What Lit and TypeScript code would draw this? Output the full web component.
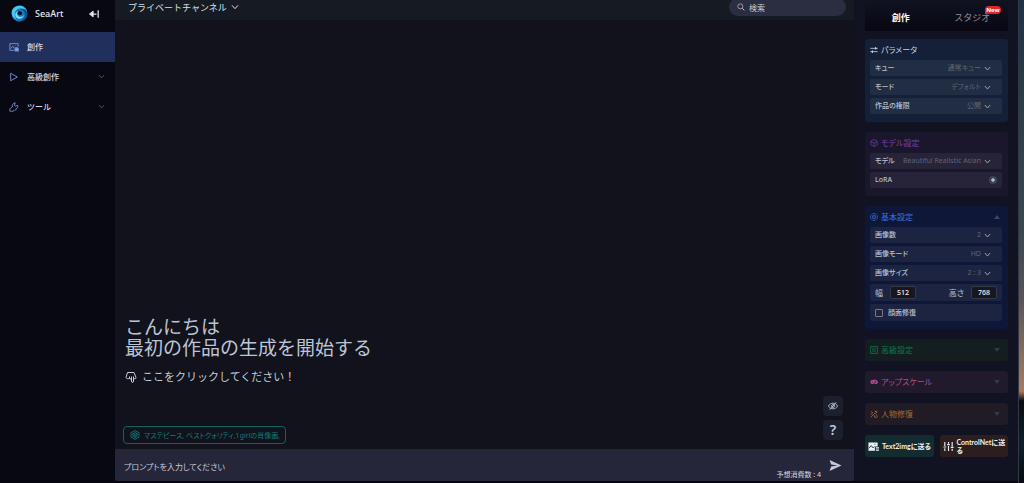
import { LitElement, html, css, svg, TemplateResult } from "lit";
import { customElement, property, state } from "lit/decorators.js";

type Option = { id: string; label: string; value: string };

const icons: Record<string, TemplateResult> = {
  chevron: svg`<path d="M3 7l9 10 9-10" stroke-width="3"/>`,
  collapse: svg`<path d="M1 12l9-7v14z" fill="currentColor"/><path d="M8 12h10M22 3v18" stroke-width="3"/>`,
  image: svg`<path d="M12 20H2V4h20v7"/><path d="M4 16l5-6 4 5 2-2M16 8h1"/><path d="M14 15h9v7h-9zM16 15v-2h5v2" fill="currentColor" stroke-width="1"/>`,
  play: svg`<path d="M4 3l16 9-16 9z"/>`,
  wrench: svg`<path d="M2 22c-1-5 1-8 5-9l1-1c-1-5 2-10 7-10l-2 6 2 2 6-2c1 4-1 7-4 8 1 2 0 3-3 3-2 3-6 4-12 3z"/>`,
  search: svg`<circle cx="10" cy="10" r="7.5"/><path d="M16 16l6 6" stroke-width="3"/>`,
  swap: svg`<path d="M1 7h22M23 17H1" stroke-width="2.500"/><path d="M15 2v10l6-5zM9 12v10l-6-5z" fill="currentColor" stroke="none"/>`,
  cube: svg`<path d="M12 1.500l9.500 5v11L12 22.500l-9.500-5v-11z"/><path d="M7 9l5-3 5 3v6l-5 3-5-3zM7 9l5 3 5-3M12 12v6"/>`,
  hex: svg`<path d="M12 1.500l9.500 5v11L12 22.500l-9.500-5v-11z"/><path d="M3 7l9 6 9-6M12 13v9" stroke-width="2"/>`,
  gear: svg`<path d="M8 2h8l6 6v8l-6 6H8l-6-6V8z"/><circle cx="12" cy="12" r="5"/><path d="M9 12h6"/>`,
  list: svg`<rect x="1" y="2" width="22" height="20" stroke-width="2.500"/><path d="M6 9h12M6 15h12" stroke-width="2.500"/>`,
  upscale: svg`<path d="M2 7h5l3-2h7l5 3 2 4-3 6h-6l-3-2-4 2H4l-3-6z" fill="currentColor" stroke="none"/><path d="M5 12h4M13 10h6M13 14h5" stroke="#241a2a"/>`,
  repair: svg`<path d="M2 22L15 9M3 4l6 5M2 13l5-2M14 3l6 3-4 5M19 13l3 8M13 16l1 6h6" stroke-width="2.500"/><circle cx="19" cy="5" r="2"/>`,
  plus: svg`<circle cx="12" cy="12" r="12" fill="#3b4450" stroke="none"/><path d="M12 6v12M6 12h12" stroke="#dfe3ea" stroke-width="3"/>`,
  hand: svg`<path d="M2 13l3-10h13l4 10c0 3-4 4-5 1v6c0 4-4 4-4 0v-6c-1 3-4 3-4 0-2 2-6 2-7-1zM9 11v4M13 11v4M17 11v3"/>`,
  eye: svg`<path d="M1 12c5-9 17-9 22 0-5 9-17 9-22 0z"/><circle cx="12" cy="12" r="3.500"/><path d="M4 21L20 3"/>`,
  send: svg`<path d="M1 2l22 10L1 22l3-8 12-2L4 10z" fill="currentColor" stroke="none"/>`,
  picture: svg`<path d="M1 3h20v9h-6v9H1z" fill="currentColor" stroke="none"/><path d="M2 16l5-6 4 5 3-3M14 7h2" stroke="#17302f"/><path d="M17 15h7M17 20h7" stroke-width="3"/>`,
  sliders: svg`<path d="M4 2v9M4 16v6M12 2v4M12 11v11M20 2v10M20 17v5M1 13h6M9 8h6M17 14h6" stroke-width="2.500"/>`,
};

const icon = (name: string, cls = "") => html`<svg
  class="icon ${cls}"
  viewBox="0 0 24 24"
  fill="none"
  stroke="currentColor"
  stroke-width="2"
  stroke-linejoin="round"
  aria-hidden="true"
>${icons[name]}</svg>`;

const shared = css`
  *, *::before, *::after { box-sizing: border-box; }
  button, input, select {
    font: inherit;
    color: inherit;
    background: none;
    border: 0;
    padding: 0;
    margin: 0;
    outline: none;
    font-feature-settings: inherit;
  }
  button, select { cursor: pointer; }
  a { color: inherit; text-decoration: none; }
  h1, h2, p { margin: 0; font: inherit; font-feature-settings: inherit; }
  .icon { display: block; flex: none; width: 10px; height: 10px; }
`;

@customElement("side-nav")
export class SideNav extends LitElement {
  static styles = [shared, css`
    :host { display: block; background: #080813; color: #d5d9e4; }
    .brand {
      display: flex; align-items: center; gap: 7px; height: 32px;
      padding: 0 16px 5px 11px; font-size: 9px; font-weight: 500; color: #e6e8ee;
    }
    .logo { width: 17px; height: 17px; flex: none; }
    .name { flex: 1; }
    .item {
      display: flex; align-items: center; gap: 8px; height: 30px;
      padding: 0 10px 1px 9px; font-size: 8px; font-weight: 500;
    }
    .glyph { color: #7d9fe0; }
    .active { background: #202f5b; }
    .label { flex: 1; }
    .more { width: 7px; height: 7px; color: #5b5f6c; }
  `];

  render() {
    return html`
      <div class="brand">
        <svg class="logo" viewBox="0 0 34 34" aria-hidden="true">
          <circle cx="17" cy="17" r="16" fill="#1478b8"/>
          <path d="M3 9C10-2 28-1 32 13 26 5 16 4 10 11 6 16 7 23 11 29 3 26-1 17 3 9z" fill="#48c8ee"/>
          <path d="M31 12c5 13-7 24-20 20 10 1 17-4 17-12 0-6-4-10-9-11 6-2 10-1 12 3z" fill="#0c4f8d"/>
          <path d="M11 25c5 5 14 2 15-5-3 4-8 5-12 2-3-3-3-7 0-10-6 2-7 9-3 13z" fill="#7fe0f4"/>
          <path d="M15 13c4-2 8 1 7 5-2 3-6 3-8 0-1-2 0-4 1-5z" fill="#071426"/>
        </svg>
        <span class="name">SeaArt</span>
        <button aria-label="メニューを閉じる">${icon("collapse")}</button>
      </div>
      <nav>
        <a class="item active" href="#create">${icon("image", "glyph")}<span class="label">創作</span></a>
        <a class="item" href="#advanced">${icon("play", "glyph")}<span class="label">高級創作</span>${icon("chevron", "more")}</a>
        <a class="item" href="#tools">${icon("wrench", "glyph")}<span class="label">ツール</span>${icon("chevron", "more")}</a>
      </nav>`;
  }
}

@customElement("channel-view")
export class ChannelView extends LitElement {
  static styles = [shared, css`
    :host { display: flex; flex-direction: column; min-width: 0; background: #11121b; color: #c6cbd8; }
    .bar {
      display: flex; justify-content: space-between; align-items: flex-start;
      height: 20px; padding: 0 8px 0 13px; background: #151a23;
    }
    .channel {
      display: flex; align-items: center; gap: 4px; height: 14px;
      font-size: 9px; color: #dde1e8;
    }
    .channel .icon { width: 8px; height: 8px; }
    .search {
      display: flex; align-items: center; gap: 4px; width: 117px; height: 18px; margin-top: -2px;
      padding: 0 8px; border-radius: 9px; background: #2b2d40; font-size: 8px;
    }
    .search .icon { width: 8px; height: 8px; }
    .search input { flex: 1; min-width: 0; }
    input::placeholder { color: #c6cbd8; opacity: 1; }
    .body { flex: 1; display: flex; justify-content: space-between; align-items: flex-end; padding: 0 11px 5px 8px; }
    .title { padding-left: 2px; font-size: 19px; line-height: 21px; color: #bcc4d6; }
    .hint {
      display: flex; align-items: center; gap: 5px; margin: 10px 0 41px;
      padding-left: 2px; font-size: 11px; line-height: 16px;
    }
    .hint .icon { width: 12px; height: 12px; }
    .chip {
      display: flex; align-items: center; gap: 4px; height: 18px; padding: 0 5px 0 6px;
      border: 1px solid #0d635f; border-radius: 4px; color: #108078;
      font-size: 7px; font-feature-settings: "palt";
    }
    .tools { display: flex; flex-direction: column; gap: 4px; padding-bottom: 4px; }
    .tool {
      display: grid; place-items: center; width: 20px; height: 20px;
      border-radius: 4px; background: #1b1f2e; font-size: 14px; line-height: 20px; font-weight: 600;
    }
    .prompt {
      display: flex; align-items: center; gap: 8px; height: 32px;
      padding: 0 12px 0 9px; border-radius: 0 0 2px 2px; background: #25263a;
      font-size: 8px; font-feature-settings: "palt";
    }
    .prompt input { flex: 1; min-width: 0; padding-top: 3px; }
    .cost { align-self: flex-end; padding-bottom: 2px; font-size: 7px; line-height: 9px; color: #d5d9e4; }
    .send .icon { width: 13px; height: 13px; }
  `];

  render() {
    return html`
      <header class="bar">
        <button class="channel">プライベートチャンネル ${icon("chevron")}</button>
        <label class="search">${icon("search")}<input type="search" placeholder="検索" aria-label="検索"></label>
      </header>
      <section class="body">
        <div>
          <h1 class="title">こんにちは<br>最初の作品の生成を開始する</h1>
          <p class="hint">${icon("hand")}ここをクリックしてください！</p>
          <button class="chip">${icon("cube")}マステピース, ベストクォリティ,1girlの肖像画,</button>
        </div>
        <div class="tools">
          <button class="tool" aria-label="非表示">${icon("eye")}</button>
          <button class="tool">?</button>
        </div>
      </section>
      <form class="prompt" @submit=${(e: Event) => e.preventDefault()}>
        <input type="text" placeholder="プロンプトを入力してください" aria-label="プロンプト">
        <span class="cost">予想消費数 : 4</span>
        <button class="send" aria-label="送信">${icon("send")}</button>
      </form>`;
  }
}

@customElement("settings-card")
export class SettingsCard extends LitElement {
  @property() heading = "";
  @property() glyph = "";
  @property() tone = "";
  @property() arrow = "";

  static styles = [shared, css`
    :host { display: block; }
    .card { padding: 0 6px 0 5px; border-radius: 3px; }
    .head { display: flex; align-items: center; gap: 3px; height: 21px; font-size: 8px; }
    .closed .head { height: 22px; padding-bottom: 1px; }
    .head .icon { width: 8px; height: 8px; }
    .label { flex: 1; }
    .rows { display: flex; flex-direction: column; gap: 3px; padding-bottom: 8px; color: #b9c0d0; }
    .arrow { border: 3px solid transparent; margin-right: 2px; }
    .up { border-bottom: 4px solid #3c4560; border-top: 0; }
    .down { border-top: 4px solid #303a4c; border-bottom: 0; }
    .navy { background: #142038; color: #c6cfe0; }
    .purple { background: #1a162c; color: #7641a8; }
    .blue { background: #0e1737; color: #3b74dc; }
    .green { background: #141d20; color: #0e7a50; }
    .pink { background: #211a2c; color: #b04c94; }
    .orange { background: #201b25; color: #a86c30; }
  `];

  render() {
    const open = this.arrow !== "down";
    return html`<section class="card ${this.tone} ${open ? "" : "closed"}">
      <h2 class="head">${icon(this.glyph)}<span class="label">${this.heading}</span>
        ${this.arrow ? html`<span class="arrow ${this.arrow}"></span>` : ""}
      </h2>
      ${open ? html`<div class="rows"><slot></slot></div>` : ""}
    </section>`;
  }
}

@customElement("settings-panel")
export class SettingsPanel extends LitElement {
  @state() private tab = "create";

  static styles = [shared, css`
    :host {
      display: flex; flex-direction: column; gap: 10px; padding: 0 10px 0 11px;
      background: #111322; color: #b9c0d0; font-feature-settings: "palt";
    }
    .tabs {
      display: grid; grid-template-columns: 1fr 1fr; height: 31px; margin-bottom: -2px;
      padding-top: 4px; background: linear-gradient(#111322, #080612); font-size: 9px;
      font-feature-settings: normal;
    }
    .tab { color: #8d909c; }
    .on { color: #fff; font-weight: 700; }
    .anchor { position: relative; }
    .badge {
      position: absolute; left: 31px; top: -5px; padding: 0 1px; border-radius: 4px 4px 4px 0;
      background: #e2252b; color: #fff; font-size: 6px; line-height: 8px; font-weight: 700;
    }
    .row {
      display: flex; align-items: center; gap: 3px; min-height: 16px; padding: 0 11px 0 5px;
      border-radius: 2px; background: rgb(255 255 255 / 6%); font-size: 7px; line-height: 10px;
      font-weight: 500;
    }
    .tall { min-height: 17px; }
    .end { padding-right: 5px; }
    .key { flex: 1; white-space: nowrap; }
    .pick {
      appearance: none; min-width: 0; max-width: 78px; overflow: hidden; text-align: right;
      color: #5e6676; font-weight: 400; line-height: 10px;
    }
    .pick option { color: #111; }
    .row .icon { width: 7px; height: 7px; color: #b4b9c4; }
    .row .plus { width: 8px; height: 8px; }
    .size { display: flex; align-items: center; gap: 7px; font-size: 8px; font-weight: 400; }
    .num {
      width: 26px; height: 13px; border: 1px solid #363a46; border-radius: 2px;
      background: #171721; color: #f0f1f4; text-align: center; font-size: 7px; font-weight: 500;
    }
    .spread { justify-content: space-between; }
    .check {
      appearance: none; width: 8px; height: 8px; margin-right: 2px; border: 1px solid #777a80; border-radius: 1px;
    }
    .actions { display: grid; grid-template-columns: 1fr 1fr; gap: 6px; }
    .action {
      display: flex; align-items: center; gap: 3px; height: 22px; padding: 0 1px 0 3px; border-radius: 3px;
      color: #f0f1f4; text-align: left; font-family: Lato, "Noto Sans CJK JP", sans-serif;
      font-size: 7px; line-height: 8px; font-weight: 700; word-break: break-all;
    }
    .action .icon { width: 11px; height: 11px; }
    .teal { background: #122c30; }
    .brown { background: #2a1e1e; }
  `];

  private pick(o: Option) {
    return html`<div class="row">
      <label class="key" for=${o.id}>${o.label}</label>
      <select class="pick" id=${o.id}><option>${o.value}</option></select>
      ${icon("chevron")}
    </div>`;
  }

  render() {
    return html`
      <div class="tabs">
        <button class="tab ${this.tab === "create" ? "on" : ""}" @click=${() => (this.tab = "create")}>創作</button>
        <button class="tab ${this.tab === "studio" ? "on" : ""}" @click=${() => (this.tab = "studio")}>
          <span class="anchor">スタジオ<span class="badge">New</span></span>
        </button>
      </div>
      <settings-card heading="パラメータ" glyph="swap" tone="navy">
        ${this.pick({ id: "queue", label: "キュー", value: "通常キュー" })}
        ${this.pick({ id: "mode", label: "モード", value: "デフォルト" })}
        ${this.pick({ id: "access", label: "作品の権限", value: "公開" })}
      </settings-card>
      <settings-card heading="モデル設定" glyph="hex" tone="purple">
        ${this.pick({ id: "model", label: "モデル", value: "Beautiful Realistic Asians" })}
        <div class="row end"><span class="key">LoRA</span><button aria-label="LoRAを追加">${icon("plus", "plus")}</button></div>
      </settings-card>
      <settings-card heading="基本設定" glyph="gear" tone="blue" arrow="up">
        ${this.pick({ id: "count", label: "画像数", value: "2" })}
        ${this.pick({ id: "quality", label: "画像モード", value: "HD" })}
        ${this.pick({ id: "ratio", label: "画像サイズ", value: "2 : 3" })}
        <div class="row tall end spread">
          <label class="size">幅<input class="num" type="text" inputmode="numeric" value="512"></label>
          <label class="size">高さ<input class="num" type="text" inputmode="numeric" value="768"></label>
        </div>
        <div class="row tall"><input class="check" type="checkbox" id="face"><label for="face">顔面修復</label></div>
      </settings-card>
      <settings-card heading="高級設定" glyph="list" tone="green" arrow="down"></settings-card>
      <settings-card heading="アップスケール" glyph="upscale" tone="pink" arrow="down"></settings-card>
      <settings-card heading="人物修復" glyph="repair" tone="orange" arrow="down"></settings-card>
      <div class="actions">
        <button class="action teal">${icon("picture")}<span>Text2imgに送る</span></button>
        <button class="action brown">${icon("sliders")}<span>ControlNetに送る</span></button>
      </div>`;
  }
}

@customElement("app-root")
export class AppRoot extends LitElement {
  static styles = css`
    :host {
      display: grid; grid-template-columns: 115px minmax(0, 1fr) 164px 6px;
      min-height: 100vh; box-sizing: border-box; padding-bottom: 2px; background: #05060f;
      font-family: "Noto Sans", "Noto Sans CJK JP", sans-serif;
    }
    .backdrop {
      margin-bottom: -2px; border-left: 1px solid #343846;
      background: linear-gradient(#1f3145, #2b3d47 20%, #3a474f 48%, #59545a 62%, #86705f 74%, #a87a5c 81%, #0b0c10 83%, #0a2029 92%, #070a10);
    }
  `;

  render() {
    return html`
      <side-nav></side-nav>
      <channel-view></channel-view>
      <settings-panel></settings-panel>
      <div class="backdrop"></div>`;
  }
}
